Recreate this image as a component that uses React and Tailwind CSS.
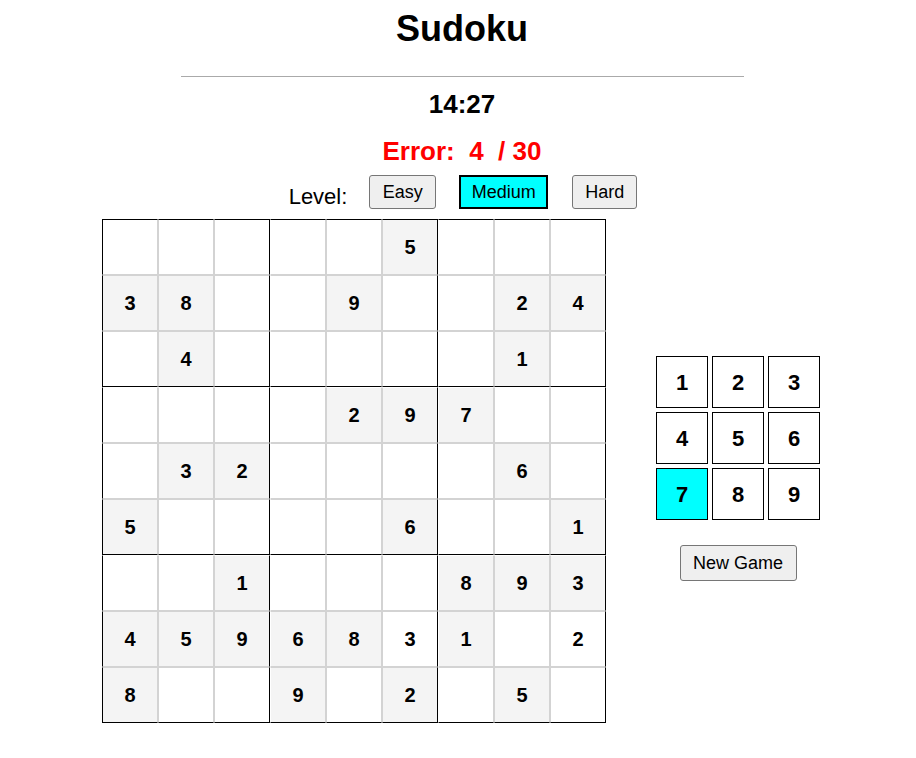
import { useState } from "react";

const board = [
  "-----5---",
  "38--9--24",
  "-4-----1-",
  "----297--",
  "-32----6-",
  "5----6--1",
  "--1---893",
  "4596831-2",
  "8--9-2-5-",
];

// cells filled in by the player (white background)
const userCells = ["7-5", "7-8"];

function Tile({ value, row, col }) {
  const given = value !== "-" && !userCells.includes(`${row}-${col}`);

  let cls =
    "w-[56px] h-[56px] box-border border border-[#d3d3d3] flex items-center justify-center text-[20px] font-bold text-black";
  if (given) cls += " bg-[#f4f4f4]";
  else cls += " bg-white";
  if (row === 0) cls += " border-t-black";
  if (row === 8) cls += " border-b-black";
  if (col === 0) cls += " border-l-black";
  if (col === 8) cls += " border-r-black";
  if (col === 2 || col === 5) cls += " border-r-black";
  if (col === 3 || col === 6) cls += " border-l-white";
  if (row === 2 || row === 5) cls += " border-b-black";
  if (row === 3 || row === 6) cls += " border-t-white";

  return <div className={cls}>{value === "-" ? "" : value}</div>;
}

function App() {
  const [level, setLevel] = useState("Medium");
  const [selected, setSelected] = useState(7);

  const levelBtn = (name) =>
    level === name
      ? "h-[34px] text-[18px] bg-[#00ffff] border-2 border-black text-black"
      : "h-[34px] text-[18px] bg-[#efefef] border border-[#767676] rounded-[3px] text-black";

  return (
    <div
      className="w-full min-h-[758px] bg-white pl-[6px] flex flex-col items-center text-black"
      style={{ fontFamily: '"Liberation Sans", Arial, sans-serif' }}
    >
      <h1 className="mt-[9px] ml-[2px] text-[36px] leading-[40px] font-bold">Sudoku</h1>
      <div className="mt-[27px] ml-[2px] w-[563px] border-t border-[#aaaaaa]" />
      <div className="mt-[12px] ml-[2px] text-[26px] leading-[30px] font-bold">14:27</div>
      <div className="mt-[17px] ml-[2px] text-[26px] leading-[30px] font-bold text-[#ff0000] whitespace-pre">
        {"Error:  4  / 30"}
      </div>

      <div className="mt-[9px] ml-[4px] flex items-end">
        <span className="text-[22px] leading-[25px] mr-[22px]">Level:</span>
        <button className={levelBtn("Easy") + " w-[67px]"} onClick={() => setLevel("Easy")}>
          Easy
        </button>
        <button
          className={levelBtn("Medium") + " w-[89px] ml-[23px]"}
          onClick={() => setLevel("Medium")}
        >
          Medium
        </button>
        <button
          className={levelBtn("Hard") + " w-[65px] ml-[24px]"}
          onClick={() => setLevel("Hard")}
        >
          Hard
        </button>
      </div>

      <div className="mt-[10px] flex items-center gap-[50px]">
        <div className="grid grid-cols-9">
          {board.map((line, r) =>
            line
              .split("")
              .map((v, c) => <Tile key={`${r}-${c}`} value={v} row={r} col={c} />)
          )}
        </div>

        <div className="flex flex-col items-center pb-[5px]">
          <div className="grid grid-cols-3 gap-[4px]">
            {[1, 2, 3, 4, 5, 6, 7, 8, 9].map((n) => (
              <div
                key={n}
                onClick={() => setSelected(n)}
                className={`w-[52px] h-[52px] box-border border border-black flex items-center justify-center text-[22px] font-bold ${
                  selected === n ? "bg-[#00ffff]" : "bg-white"
                }`}
              >
                {n}
              </div>
            ))}
          </div>
          <button className="mt-[25px] h-[36px] w-[117px] text-[18px] bg-[#efefef] border border-[#767676] rounded-[3px]">
            New Game
          </button>
        </div>
      </div>
    </div>
  );
}

export default App;
